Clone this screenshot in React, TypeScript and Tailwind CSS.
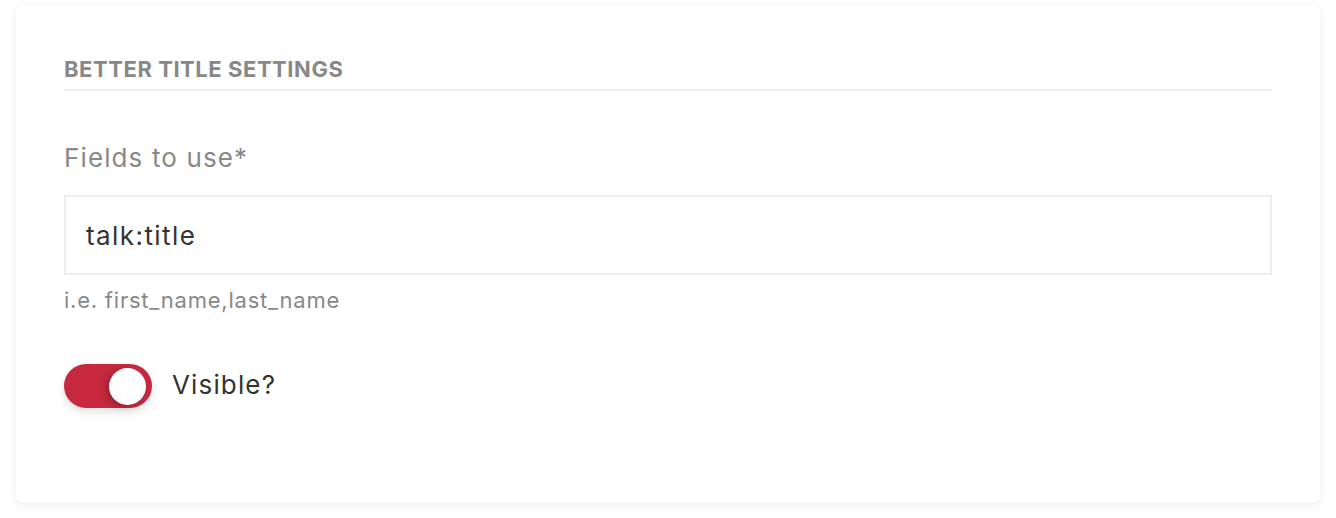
import React from "react";

export default function App() {
  const [visible, setVisible] = React.useState(true);
  const [fields, setFields] = React.useState("talk:title");

  return (
    <div className="min-h-screen bg-white px-4 pt-[5px] font-['Inter',sans-serif]">
      <div className="h-[498px] rounded-lg bg-white px-12 pt-[50px] shadow-[0_2px_10px_rgba(0,0,0,0.08)]">
        {/* Section header */}
        <h2 className="border-b-2 border-[#eeeeee] pb-[6px] text-[22px] leading-7 font-bold tracking-[0.025em] text-[#888888] uppercase">
          Better Title Settings
        </h2>

        {/* Fields input */}
        <div className="mt-[51px]">
          <label className="block text-[26px] leading-8 tracking-[0.043em] text-[#888888]">Fields to use*</label>
          <input
            value={fields}
            onChange={(e) => setFields(e.target.value)}
            className="mt-[21px] h-[80px] w-full border-2 border-[#eeeeee] bg-white px-5 text-[26px] tracking-[0.055em] text-[#333333] outline-none"
          />
          <p className="mt-[11px] text-[22px] leading-7 tracking-[0.035em] text-[#888888]">i.e. first_name,last_name</p>
        </div>

        {/* Visible toggle */}
        <div className="mt-[50px] flex items-center gap-5">
          <button
            onClick={() => setVisible(!visible)}
            className={`flex h-[44px] w-[88px] items-center rounded-full px-[6px] shadow-[0_4px_8px_rgba(0,0,0,0.12)] ${
              visible ? "justify-end bg-[#c6293f]" : "justify-start bg-[#dddddd]"
            }`}
          >
            <span className="h-[37px] w-[37px] rounded-full bg-white shadow-[-3px_2px_6px_rgba(0,0,0,0.25)]" />
          </button>
          <span className="-mt-[4px] text-[26px] tracking-[0.044em] text-[#333333]">Visible?</span>
        </div>
      </div>
    </div>
  );
}
